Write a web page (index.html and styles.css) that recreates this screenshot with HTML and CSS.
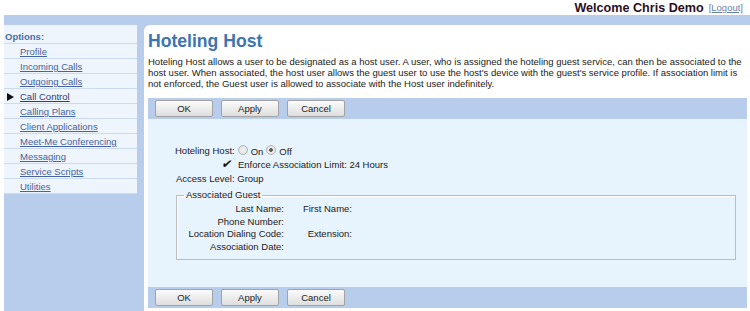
FILE: index.html
```html
<!DOCTYPE html>
<html lang="en">
<head>
    <meta charset="UTF-8">
    <title>Hoteling Host</title>
    <link rel="stylesheet" href="styles.css">
</head>
<body>
    <div class="header">
        <span class="welcome">Welcome Chris Demo</span>
        <a href="#" class="logout">[Logout]</a>
    </div>

    <div class="frame">
        <div class="sidebar">
            <ul class="menu">
                <li class="menu-title">Options:</li>
                <li><a href="#">Profile</a></li>
                <li><a href="#">Incoming Calls</a></li>
                <li><a href="#">Outgoing Calls</a></li>
                <li class="current"><a href="#">Call Control</a></li>
                <li><a href="#">Calling Plans</a></li>
                <li><a href="#">Client Applications</a></li>
                <li><a href="#">Meet-Me Conferencing</a></li>
                <li><a href="#">Messaging</a></li>
                <li><a href="#">Service Scripts</a></li>
                <li><a href="#">Utilities</a></li>
            </ul>
        </div>

        <div class="main">
            <h1>Hoteling Host</h1>
            <p class="intro">Hoteling Host allows a user to be designated as a host user. A user, who is assigned the hoteling guest service, can then be associated to the host user. When associated, the host user allows the guest user to use the host's device with the guest's service profile. If association limit is not enforced, the Guest user is allowed to associate with the Host user indefinitely.</p>

            <div class="button-bar">
                <button>OK</button>
                <button>Apply</button>
                <button>Cancel</button>
            </div>

            <div class="form-area">
                <div class="row">
                    <span>Hoteling Host:</span>
                    <label class="radio"><input type="radio" name="host"> On</label>
                    <label class="radio"><input type="radio" name="host" checked> Off</label>
                </div>
                <div class="row enforce">
                    <span class="check">&#10004;</span>
                    <span>Enforce Association Limit: 24 Hours</span>
                </div>
                <div class="row">
                    <span>Access Level: Group</span>
                </div>

                <fieldset class="guest">
                    <legend>Associated Guest</legend>
                    <div class="guest-grid">
                        <span>Last Name:</span><span>First Name:</span><span></span>
                        <span>Phone Number:</span><span></span><span></span>
                        <span>Location Dialing Code:</span><span>Extension:</span><span></span>
                        <span>Association Date:</span><span></span><span></span>
                    </div>
                </fieldset>
            </div>

            <div class="button-bar">
                <button>OK</button>
                <button>Apply</button>
                <button>Cancel</button>
            </div>
        </div>
    </div>
</body>
</html>
```

FILE: styles.css
```css
html, body {
    height: 100%;
}
body {
    margin: 0;
    font-family: "Liberation Sans", Arial, sans-serif;
    font-size: 9.5px;
    color: #222;
    background-color: #fff;
    overflow: hidden;
}
.header {
    height: 15px;
    display: flex;
    justify-content: flex-end;
    align-items: center;
    padding-right: 7px;
}
.welcome {
    font-size: 12.6px;
    font-weight: bold;
    color: #2b0f1f;
}
.logout {
    font-size: 9.5px;
    color: #6a7fa8;
    margin-left: 5px;
}
.frame {
    margin-left: 4px;
    height: calc(100% - 15px);
    box-sizing: border-box;
    padding-top: 10px;
    background-color: #b8cceb;
    display: flex;
    gap: 7px;
}
.sidebar {
    width: 133px;
    flex-shrink: 0;
}
.menu {
    list-style: none;
    margin: 0;
    padding: 0;
    background-color: #eef5fd;
}
.menu li {
    height: 14px;
    line-height: 15px;
    border-bottom: 1px solid #cbdaef;
    padding-left: 16px;
    position: relative;
}
.menu a {
    color: #45639c;
}
.menu .menu-title {
    height: 18px;
    line-height: 23px;
    padding-left: 1px;
    font-weight: bold;
    color: #4c6ea4;
}
.menu .current a {
    color: #2c3f7a;
}
.menu .current::before {
    content: "";
    position: absolute;
    left: 3px;
    top: 4px;
    border-left: 7px solid #111;
    border-top: 4px solid transparent;
    border-bottom: 4px solid transparent;
}
.main {
    flex: 1;
    background-color: #fff;
    border-top-left-radius: 6px;
    padding: 6px 3px 0 4px;
}
h1 {
    margin: 0;
    font-size: 17.6px;
    line-height: 20px;
    color: #3d75b0;
}
.intro {
    margin: 5px 0 9px;
    line-height: 11px;
}
.button-bar {
    background-color: #b8cceb;
    padding: 2px 7px;
    display: flex;
    gap: 8px;
}
.button-bar button {
    width: 58px;
    height: 17px;
    padding: 0;
    font-family: "Liberation Sans", Arial, sans-serif;
    font-size: 9.5px;
    color: #222;
    border: 1px solid #a3a3a3;
    border-radius: 2px;
    background: linear-gradient(#fbfbfb, #dedede);
}
.form-area {
    background-color: #e7f3fd;
    padding: 24px 11px 27px 27px;
}
.row {
    height: 14px;
    display: flex;
    align-items: center;
}
.radio {
    display: flex;
    align-items: center;
    margin-left: 3px;
    padding-top: 2px;
}
.radio input {
    appearance: none;
    width: 10px;
    height: 10px;
    margin: 0 3px 2px 0;
    border: 1px solid #b4b4b4;
    border-radius: 50%;
    background: radial-gradient(#f4f4f4, #dcdcdc);
    box-sizing: border-box;
}
.radio input:checked {
    background: radial-gradient(#555 0, #666 1.6px, #eee 2.2px, #dcdcdc 100%);
}
.enforce {
    padding-left: 47px;
}
.check {
    font-family: "DejaVu Sans", sans-serif;
    font-size: 12px;
    width: 16px;
    color: #111;
    transform: skewX(-12deg);
}
.row:last-of-type {
    padding-left: 1px;
}
.guest {
    margin: 4px 0 0 1px;
    padding: 1px 0 6px 9px;
    border: 1px solid #bcbcbc;
    box-shadow: inset 1px 1px 0 #fff;
}
.guest legend {
    padding: 0 2px;
    margin-left: -2px;
    line-height: 12px;
}
.guest-grid {
    display: grid;
    grid-template-columns: 98px 68px 1fr;
    grid-auto-rows: 12.7px;
    align-items: center;
}
.guest-grid span {
    text-align: right;
}
```
